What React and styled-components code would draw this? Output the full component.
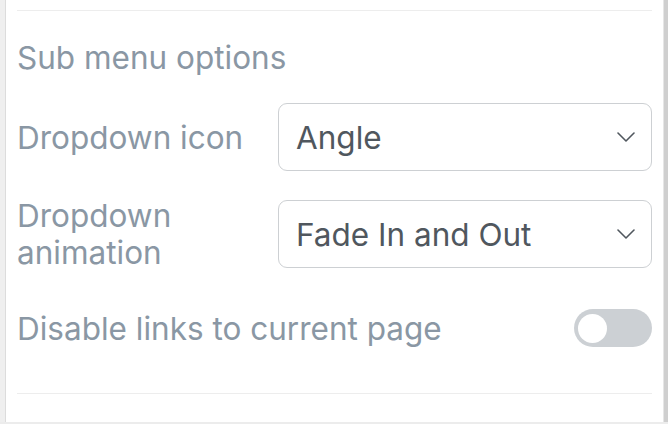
import React from "react";
import styled, { createGlobalStyle } from "styled-components";

const Global = createGlobalStyle`
  html, body { margin: 0; padding: 0; background: #fff; }
  body { font-family: Inter, "Noto Sans", "Liberation Sans", sans-serif; }
  * { box-sizing: border-box; }
`;

const Frame = styled.div`
  width: 668px;
  height: 424px;
  display: flex;
  flex-direction: column;
  overflow: hidden;
  background: #fff;
`;

const Body = styled.div`
  flex: 1;
  display: flex;
  min-height: 0;
`;

const LeftRail = styled.div`
  width: 6px;
  background: #efefef;
  border-right: 1px solid #dcdcdc;
`;

const RightRail = styled.div`
  width: 5px;
  background: #cfcfcf;
  border-left: 1px solid #e6e6e6;
`;

const BottomRail = styled.div`
  height: 2px;
  background: #ececec;
`;

const Panel = styled.div`
  flex: 1;
  padding: 10px 11px 0 11px;
  display: flex;
  flex-direction: column;
`;

const Divider = styled.div`
  height: 1px;
  background: #ededed;
`;

const Heading = styled.div`
  margin-top: 30px;
  line-height: 34px;
  font-size: 31.5px;
  color: #8a97a4;
`;

const Row = styled.div`
  display: grid;
  grid-template-columns: 261px 1fr;
  grid-template-rows: 68px;
  align-items: center;
  margin-top: ${(p) => p.$mt}px;
`;

const Label = styled.div`
  font-size: 31.5px;
  line-height: 37px;
  color: #8a97a4;
  white-space: ${(p) => (p.$nowrap ? "nowrap" : "normal")};
`;

const Select = styled.div`
  height: 68px;
  border: 1.5px solid #cdd0d3;
  border-radius: 9px;
  display: flex;
  align-items: center;
  justify-content: space-between;
  padding: 0 16px 0 17px;
  font-size: 31.5px;
  color: #50575e;
`;

const ToggleRow = styled.div`
  display: flex;
  align-items: center;
  justify-content: space-between;
  margin-top: 41px;
  height: 38px;
`;

const Toggle = styled.div`
  width: 78px;
  height: 38px;
  border-radius: 19px;
  background: #ccd0d4;
  display: flex;
  align-items: center;
  padding-left: 4px;
`;

const Knob = styled.div`
  width: 29px;
  height: 29px;
  border-radius: 50%;
  background: #fff;
`;

const Spacer = styled.div`
  height: 46px;
`;

const Chevron = () => (
  <svg width="18" height="10" viewBox="0 0 18 10" fill="none">
    <path d="M1 1l8 8 8-8" stroke="#50575e" strokeWidth="1.6" strokeLinecap="round" strokeLinejoin="round" />
  </svg>
);

export default function App() {
  return (
    <>
      <Global />
      <Frame>
        <Body>
          <LeftRail />
          <Panel>
            <Divider />
            <Heading>Sub menu options</Heading>
            <Row $mt={28}>
              <Label>Dropdown icon</Label>
              <Select>
                <span>Angle</span>
                <Chevron />
              </Select>
            </Row>
            <Row $mt={29}>
              <Label>Dropdown animation</Label>
              <Select>
                <span>Fade In and Out</span>
                <Chevron />
              </Select>
            </Row>
            <ToggleRow>
              <Label $nowrap>Disable links to current page</Label>
              <Toggle>
                <Knob />
              </Toggle>
            </ToggleRow>
            <Spacer />
            <Divider />
          </Panel>
          <RightRail />
        </Body>
        <BottomRail />
      </Frame>
    </>
  );
}
